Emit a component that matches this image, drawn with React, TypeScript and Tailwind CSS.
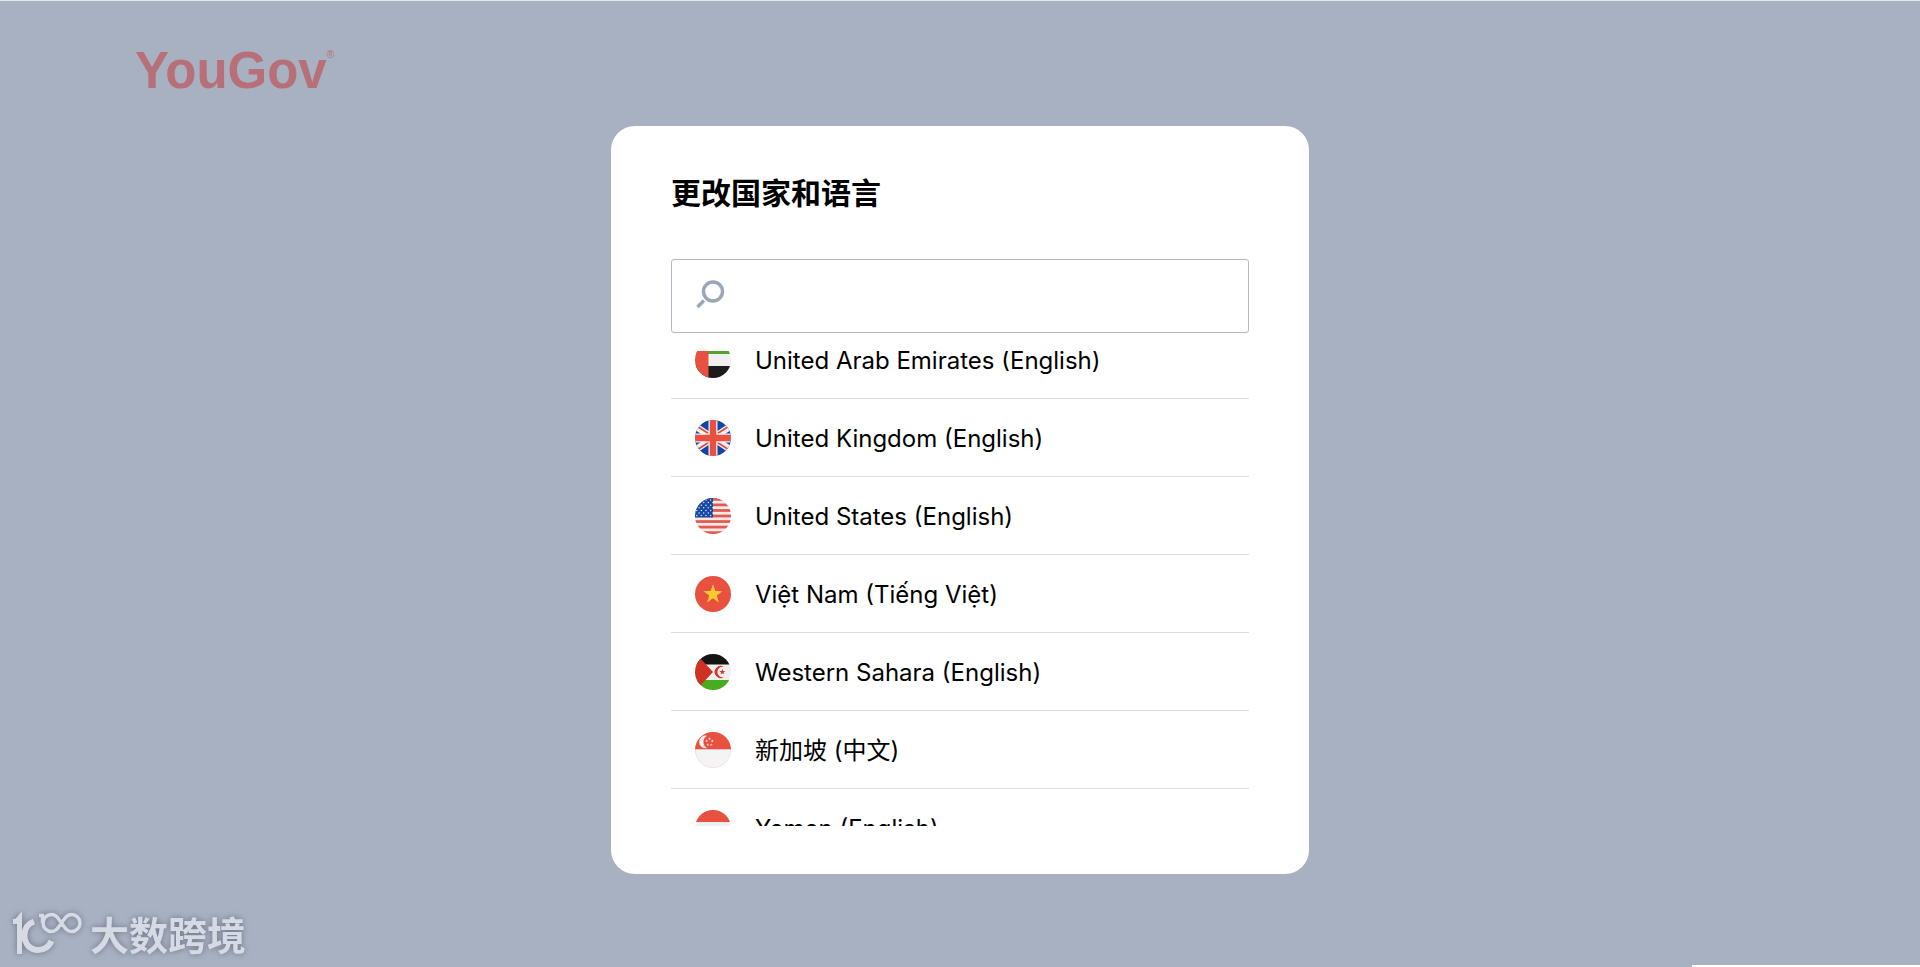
import { useId, useLayoutEffect, useRef, useState, type ReactNode } from "react";

const RED = "#e8503f";
const STAR =
  "0,-1 0.235,-0.324 0.951,-0.309 0.38,0.124 0.588,0.809 0,0.4 -0.588,0.809 -0.38,0.124 -0.951,-0.309 -0.235,-0.324";

function Star({ x, y, r, fill }: { x: number; y: number; r: number; fill: string }) {
  return <polygon points={STAR} fill={fill} transform={`translate(${x} ${y}) scale(${r})`} />;
}

function Flag({ children }: { children: ReactNode }) {
  const id = useId();
  return (
    <svg viewBox="0 0 36 36" className="size-9 shrink-0" aria-hidden="true">
      <clipPath id={id}>
        <circle cx="18" cy="18" r="18" />
      </clipPath>
      <g clipPath={`url(#${id})`}>{children}</g>
    </svg>
  );
}

const uae = (
  <>
    <rect width="36" height="36" fill="#f0f0f0" />
    <rect width="36" height="12" fill="#4fa52b" />
    <rect y="24" width="36" height="12" fill="#1c1c1c" />
    <rect width="13.5" height="36" fill={RED} />
  </>
);

const uk = (
  <>
    <rect width="36" height="36" fill="#0f47a8" />
    <path d="M-6 2 42 34M42 2-6 34" stroke="#f3f1f4" strokeWidth="6.5" />
    <path d="M1 5.5 15 14.5M21 21.5 35 30.5M35 5.5 21 14.5M15 21.5 1 30.5" stroke={RED} strokeWidth="2" />
    <path d="M18 0V36M0 18H36" stroke="#f3f1f4" strokeWidth="9" />
    <path d="M18 0V36M0 18H36" stroke={RED} strokeWidth="6.4" />
  </>
);

const us = (
  <>
    <rect width="36" height="36" fill="#f9e9e8" />
    {[0, 1, 2, 3, 4, 5, 6].map((n) => (
      <rect key={n} y={n * 5.54} width="36" height="2.77" fill="#e05a50" />
    ))}
    <rect width="18" height="19.4" fill="#1549a3" />
    {[0, 1, 2, 3, 4, 5, 6].map((row) =>
      [0, 1, 2, 3].map((col) => (
        <circle
          key={`${row}-${col}`}
          cx={1.8 + col * 4.6 + (row % 2) * 2.3}
          cy={2 + row * 2.6}
          r="0.75"
          fill="#dfe9f8"
        />
      )),
    )}
  </>
);

const vietnam = (
  <>
    <rect width="36" height="36" fill={RED} />
    <Star x={18} y={18.3} r={10} fill="#fdc92f" />
  </>
);

const westernSahara = (
  <>
    <rect width="36" height="36" fill="#f0f0f0" />
    <rect width="36" height="10.5" fill="#141414" />
    <rect y="26" width="36" height="10" fill="#48ab20" />
    <path d="M5 4 18 18 5 32H0V4Z" fill="#ce3223" />
    <path d="M29 13A6 6 0 1 0 29 23A5.2 5.2 0 1 1 29 13Z" fill="#d8352a" />
    <Star x={27.3} y={18} r={3.2} fill="#d8352a" />
  </>
);

const singapore = (
  <>
    <rect width="36" height="36" fill="#f4f4f4" />
    <circle cx="18" cy="18" r="17.7" fill="none" stroke="#f0cdca" strokeWidth="0.6" />
    <rect width="36" height="17.3" fill={RED} />
    <path d="M12 3.8A6.3 6.3 0 1 0 12 16A7 7 0 0 1 12 3.8Z" fill="#fbeeee" />
    <Star x={14.5} y={6.8} r={1.5} fill="#fbe3e0" />
    <Star x={11.7} y={9.1} r={1.5} fill="#fbe3e0" />
    <Star x={17.3} y={9.1} r={1.5} fill="#fbe3e0" />
    <Star x={12.8} y={12.7} r={1.5} fill="#fbe3e0" />
    <Star x={16.3} y={12.7} r={1.5} fill="#fbe3e0" />
  </>
);

const yemen = (
  <>
    <rect width="36" height="36" fill="#f0f0f0" />
    <rect width="36" height="12" fill={RED} />
    <rect y="24" width="36" height="12" fill="#1c1c1c" />
  </>
);

const countries = [
  { name: "United Arab Emirates (English)", flag: uae },
  { name: "United Kingdom (English)", flag: uk },
  { name: "United States (English)", flag: us },
  { name: "Việt Nam (Tiếng Việt)", flag: vietnam },
  { name: "Western Sahara (English)", flag: westernSahara },
  { name: "新加坡 (中文)", flag: singapore },
  { name: "Yemen (English)", flag: yemen },
];

function SearchIcon() {
  return (
    <svg viewBox="0 0 28 28" className="size-7 shrink-0 overflow-visible" fill="none" stroke="#9ba6b7" aria-hidden="true">
      <circle cx="17" cy="9.5" r="9.5" strokeWidth="3.4" />
      <path d="M8 18.5 1.5 25" strokeWidth="3.4" />
    </svg>
  );
}

function Watermark() {
  return (
    <footer className="absolute bottom-2 left-3 flex items-center gap-2 text-[#d5dae4] drop-shadow-[0_0_3px_#6b7485]">
      <svg viewBox="0 0 70 46" className="h-[46px] w-[70px] overflow-visible" fill="none" stroke="currentColor" aria-hidden="true">
        <path d="M1 8.5H4.5L7.5 5V41" strokeWidth="5" />
        <path d="M22 8.5C15 11 12.5 16 12.5 22C12.5 31 18 37 26 37C33 37 37 33.5 39.5 28" strokeWidth="6" />
        <path d="M27 2.500H30.500V10" strokeWidth="3.500" />
        <path
          d="M49.500 10C46 5 44 1.500 39.500 1.500A8.500 8.500 0 0 0 39.500 18.500C44 18.500 46 15 49.500 10C53 5 55 1.500 59.500 1.500A8.500 8.500 0 0 1 59.500 18.500C55 18.500 53 15 49.500 10Z"
          strokeWidth="3.500"
        />
      </svg>
      <span className="text-[39px] leading-[46px] font-bold">大数跨境</span>
    </footer>
  );
}

export default function App() {
  const listRef = useRef<HTMLUListElement>(null);
  const [query, setQuery] = useState("");

  useLayoutEffect(() => {
    if (listRef.current) listRef.current.scrollTop = 30;
  }, []);

  const shown = countries.filter((c) => c.name.toLowerCase().includes(query.toLowerCase()));

  return (
    <div className="relative flex min-h-screen flex-col overflow-hidden border-t border-[#e4e8ee] bg-[#a8b1c2] font-['Inter','Noto_Sans_CJK_SC',sans-serif] text-black">
      <header className="flex h-[125px] items-start px-[135px] pt-10">
        <a
          href="#"
          className="flex items-start font-['Liberation_Sans',sans-serif] text-[#b77078]"
        >
          <span className="text-[51px] leading-[60px] font-bold">YouGov</span>
          <sup className="top-0 text-[10px] leading-7">®</sup>
        </a>
      </header>

      <main className="mx-auto w-full max-w-[698px] rounded-3xl bg-white px-[60px] pb-12">
        <h1 className="pt-[45px] pb-[43px] text-[30px] leading-[45px] font-bold">更改国家和语言</h1>
        <label className="flex h-[74px] items-center gap-4 rounded-[3px] border border-[#b2b8c4] px-6">
          <SearchIcon />
          <input
            type="search"
            aria-label="搜索"
            value={query}
            onChange={(e) => setQuery(e.target.value)}
            className="min-w-0 flex-1 bg-transparent text-2xl outline-none"
          />
        </label>
        <ul ref={listRef} className="mt-[18px] h-[475px] overflow-y-auto [scrollbar-width:none]">
          {shown.map((c) => (
            <li key={c.name} className="border-b border-[#dcdee2]">
              <button type="button" className="flex h-[77px] w-full items-center gap-6 px-6 text-left">
                <Flag>{c.flag}</Flag>
                <span className="pt-0.5 text-2xl">{c.name}</span>
              </button>
            </li>
          ))}
        </ul>
      </main>

      <Watermark />
      <div className="absolute right-0 bottom-0 h-[2px] w-[228px] bg-white" />
    </div>
  );
}
